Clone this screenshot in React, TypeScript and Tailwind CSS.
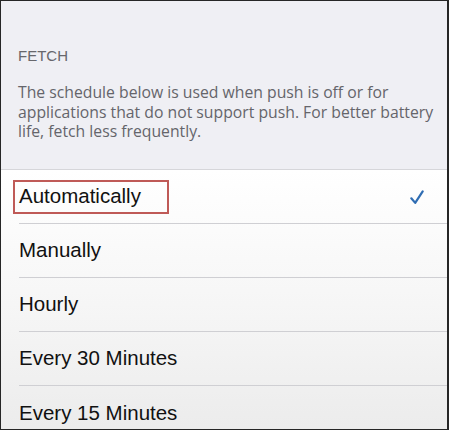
import React from "react";

const rows = ["Automatically", "Manually", "Hourly", "Every 30 Minutes", "Every 15 Minutes"];

export default function App() {
  return (
    <div
      className="w-[449px] h-[430px] overflow-hidden border-t border-b border-l border-r-2 border-[#262626] bg-[#efeff4]"
      style={{ fontFamily: '"Liberation Sans", Arial, sans-serif' }}
    >
      <div className="h-[169px] border-b border-[#d6d6da] bg-[#efeff4] px-[17px] pt-[46px]">
        <div className="text-[15px] leading-[18px] text-[#67676c]">FETCH</div>
        <p
          className="mt-[18px] w-[424px] text-[15.75px] leading-[19.5px] text-[#65656b]"
          style={{ fontFamily: '"Open Sans", sans-serif' }}
        >
          The schedule below is used when push is off or for applications that do not support push. For better battery
          life, fetch less frequently.
        </p>
      </div>
      <div className="bg-gradient-to-b from-white via-[#f6f6f6] to-[#ebebeb]">
        {rows.map((r, i) => (
          <div key={r} className="relative h-[54px] pl-[18px]">
            <div
              className={
                "flex h-full items-center pr-[23px] " +
                (i < rows.length - 1 ? "border-b border-[#cfcfd3]" : "")
              }
            >
              <span className="flex-1 text-[20.5px] text-[#111111]">{r}</span>
              {i === 0 && (
                <svg width="14" height="15" viewBox="0 0 14 15" className="mt-[2px]">
                  <path
                    d="M1.3 8.3 L5.2 12.9 L12.7 1.4"
                    fill="none"
                    stroke="#2f6db3"
                    strokeWidth="2.2"
                    strokeLinecap="round"
                    strokeLinejoin="round"
                  />
                </svg>
              )}
            </div>
            {i === 0 && (
              <div className="absolute left-[12px] top-[10px] h-[34px] w-[156px] border-2 border-[#bf5a57]" />
            )}
          </div>
        ))}
      </div>
    </div>
  );
}
